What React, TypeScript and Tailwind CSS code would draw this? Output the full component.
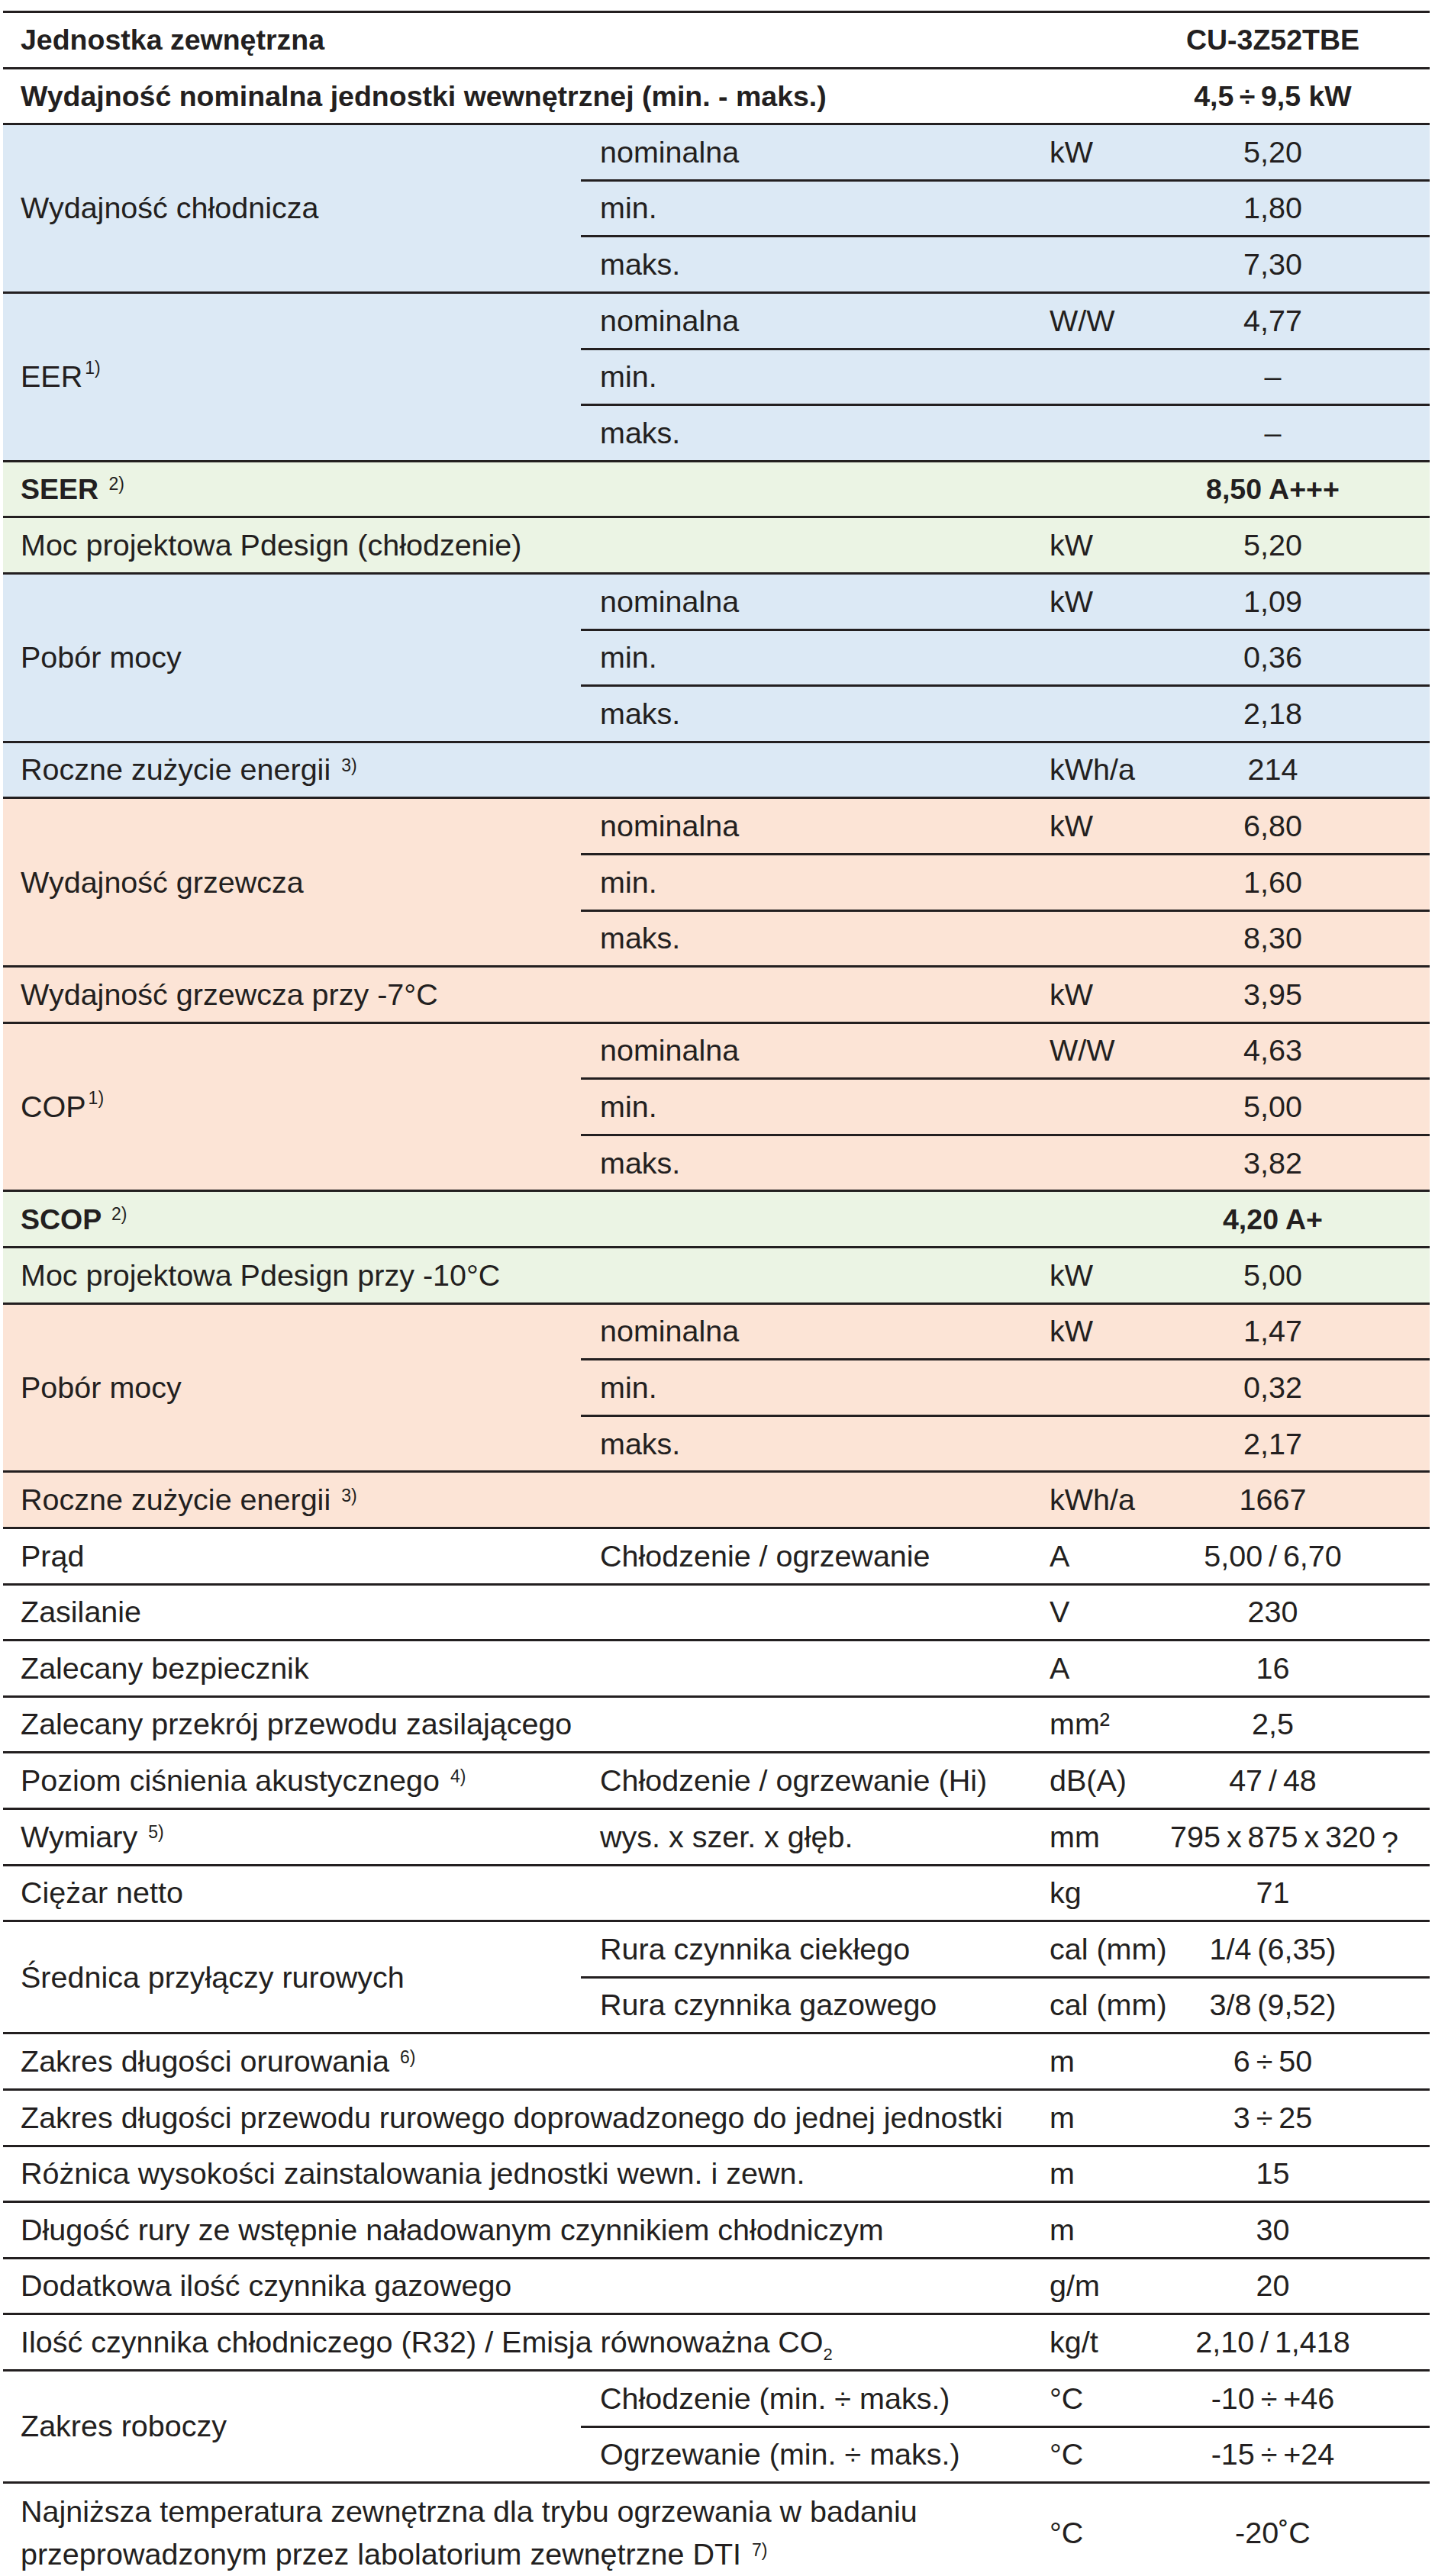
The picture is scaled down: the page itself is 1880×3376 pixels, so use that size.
import React from "react";

const BLUE = "bg-[#dce9f5]";
const GREEN = "bg-[#ebf4e4]";
const PEACH = "bg-[#fce4d6]";
const WHITE = "bg-white";

type Sub = { sub?: React.ReactNode; unit?: React.ReactNode; value?: React.ReactNode };

type Group = {
  bg: string;
  label: React.ReactNode;
  bold?: boolean;
  rows: Sub[];
};

const Note: React.FC<{ n: number }> = ({ n }) => (
  <sup className="ml-[3px] text-[23px] font-normal">{n})</sup>
);

const t = "\u2009";

const groups: Group[] = [
  { bg: WHITE, bold: true, label: "Jednostka zewnętrzna", rows: [{ value: "CU-3Z52TBE" }] },
  {
    bg: WHITE,
    bold: true,
    label: "Wydajność nominalna jednostki wewnętrznej (min. - maks.)",
    rows: [{ value: `4,5${t}÷${t}9,5 kW` }],
  },
  {
    bg: BLUE,
    label: "Wydajność chłodnicza",
    rows: [
      { sub: "nominalna", unit: "kW", value: "5,20" },
      { sub: "min.", value: "1,80" },
      { sub: "maks.", value: "7,30" },
    ],
  },
  {
    bg: BLUE,
    label: (
      <>
        EER <Note n={1} />
      </>
    ),
    rows: [
      { sub: "nominalna", unit: "W/W", value: "4,77" },
      { sub: "min.", value: "–" },
      { sub: "maks.", value: "–" },
    ],
  },
  {
    bg: GREEN,
    bold: true,
    label: (
      <>
        SEER <Note n={2} />
      </>
    ),
    rows: [{ value: "8,50 A+++" }],
  },
  { bg: GREEN, label: "Moc projektowa Pdesign (chłodzenie)", rows: [{ unit: "kW", value: "5,20" }] },
  {
    bg: BLUE,
    label: "Pobór mocy",
    rows: [
      { sub: "nominalna", unit: "kW", value: "1,09" },
      { sub: "min.", value: "0,36" },
      { sub: "maks.", value: "2,18" },
    ],
  },
  {
    bg: BLUE,
    label: (
      <>
        Roczne zużycie energii <Note n={3} />
      </>
    ),
    rows: [{ unit: "kWh/a", value: "214" }],
  },
  {
    bg: PEACH,
    label: "Wydajność grzewcza",
    rows: [
      { sub: "nominalna", unit: "kW", value: "6,80" },
      { sub: "min.", value: "1,60" },
      { sub: "maks.", value: "8,30" },
    ],
  },
  { bg: PEACH, label: "Wydajność grzewcza przy -7°C", rows: [{ unit: "kW", value: "3,95" }] },
  {
    bg: PEACH,
    label: (
      <>
        COP <Note n={1} />
      </>
    ),
    rows: [
      { sub: "nominalna", unit: "W/W", value: "4,63" },
      { sub: "min.", value: "5,00" },
      { sub: "maks.", value: "3,82" },
    ],
  },
  {
    bg: GREEN,
    bold: true,
    label: (
      <>
        SCOP <Note n={2} />
      </>
    ),
    rows: [{ value: "4,20 A+" }],
  },
  { bg: GREEN, label: "Moc projektowa Pdesign przy -10°C", rows: [{ unit: "kW", value: "5,00" }] },
  {
    bg: PEACH,
    label: "Pobór mocy",
    rows: [
      { sub: "nominalna", unit: "kW", value: "1,47" },
      { sub: "min.", value: "0,32" },
      { sub: "maks.", value: "2,17" },
    ],
  },
  {
    bg: PEACH,
    label: (
      <>
        Roczne zużycie energii <Note n={3} />
      </>
    ),
    rows: [{ unit: "kWh/a", value: "1667" }],
  },
  { bg: WHITE, label: "Prąd", rows: [{ sub: "Chłodzenie / ogrzewanie", unit: "A", value: `5,00${t}/${t}6,70` }] },
  { bg: WHITE, label: "Zasilanie", rows: [{ unit: "V", value: "230" }] },
  { bg: WHITE, label: "Zalecany bezpiecznik", rows: [{ unit: "A", value: "16" }] },
  { bg: WHITE, label: "Zalecany przekrój przewodu zasilającego", rows: [{ unit: "mm²", value: "2,5" }] },
  {
    bg: WHITE,
    label: (
      <>
        Poziom ciśnienia akustycznego <Note n={4} />
      </>
    ),
    rows: [{ sub: "Chłodzenie / ogrzewanie (Hi)", unit: "dB(A)", value: `47${t}/${t}48` }],
  },
  {
    bg: WHITE,
    label: (
      <>
        Wymiary <Note n={5} />
      </>
    ),
    rows: [
      {
        sub: "wys. x szer. x głęb.",
        unit: "mm",
        value: (
          <span className="relative">
            795{t}x{t}875{t}x{t}320
            <span className="absolute top-0 left-full ml-[8px]">?</span>
          </span>
        ),
      },
    ],
  },
  { bg: WHITE, label: "Ciężar netto", rows: [{ unit: "kg", value: "71" }] },
  {
    bg: WHITE,
    label: "Średnica przyłączy rurowych",
    rows: [
      { sub: "Rura czynnika ciekłego", unit: "cal (mm)", value: `1/4${t}(6,35)` },
      { sub: "Rura czynnika gazowego", unit: "cal (mm)", value: `3/8${t}(9,52)` },
    ],
  },
  {
    bg: WHITE,
    label: (
      <>
        Zakres długości orurowania <Note n={6} />
      </>
    ),
    rows: [{ unit: "m", value: `6${t}÷${t}50` }],
  },
  {
    bg: WHITE,
    label: "Zakres długości przewodu rurowego doprowadzonego do jednej jednostki",
    rows: [{ unit: "m", value: `3${t}÷${t}25` }],
  },
  { bg: WHITE, label: "Różnica wysokości zainstalowania jednostki wewn. i zewn.", rows: [{ unit: "m", value: "15" }] },
  {
    bg: WHITE,
    label: "Długość rury ze wstępnie naładowanym czynnikiem chłodniczym",
    rows: [{ unit: "m", value: "30" }],
  },
  { bg: WHITE, label: "Dodatkowa ilość czynnika gazowego", rows: [{ unit: "g/m", value: "20" }] },
  {
    bg: WHITE,
    label: (
      <>
        Ilość czynnika chłodniczego (R32) / Emisja równoważna CO
        <sub className="bottom-[-10px] text-[22px]">2</sub>
      </>
    ),
    rows: [{ unit: "kg/t", value: `2,10${t}/${t}1,418` }],
  },
  {
    bg: WHITE,
    label: "Zakres roboczy",
    rows: [
      { sub: "Chłodzenie (min. ÷ maks.)", unit: "°C", value: `-10${t}÷${t}+46` },
      { sub: "Ogrzewanie (min. ÷ maks.)", unit: "°C", value: `-15${t}÷${t}+24` },
    ],
  },
];

const UnitValue: React.FC<{ row: Sub; bold?: boolean }> = ({ row, bold }) => (
  <>
    <div className="w-[168px] shrink-0 pl-[23px] whitespace-nowrap">{row.unit}</div>
    <div className={`w-[295px] shrink-0 text-center whitespace-nowrap ${bold ? "text-[37.5px] font-bold" : ""}`}>
      {row.value}
    </div>
    <div className="flex-1" />
  </>
);

const Cells: React.FC<{ row: Sub; bold?: boolean }> = ({ row, bold }) => (
  <>
    <div className="w-[591px] shrink-0 pl-[25px] whitespace-nowrap">{row.sub}</div>
    <UnitValue row={row} bold={bold} />
  </>
);

const GroupRow: React.FC<{ g: Group }> = ({ g }) => {
  if (g.rows.length === 1) {
    return (
      <div className={`flex h-[73.6px] items-center border-t-[3px] border-[#231f20] ${g.bg}`}>
        <div className={`w-[757px] shrink-0 pl-[23px] whitespace-nowrap ${g.bold ? "text-[37.5px] font-bold" : ""}`}>
          {g.label}
        </div>
        <Cells row={g.rows[0]} bold={g.bold} />
      </div>
    );
  }
  return (
    <div className={`flex border-t-[3px] border-[#231f20] ${g.bg}`}>
      <div className="flex w-[757px] shrink-0 items-center pl-[23px] whitespace-nowrap">{g.label}</div>
      <div className="flex flex-1 flex-col">
        {g.rows.map((r, i) => (
          <div
            key={i}
            className={
              i === 0 ? "flex h-[70.6px] items-center" : "flex h-[73.6px] items-center border-t-[3px] border-[#231f20]"
            }
          >
            <Cells row={r} />
          </div>
        ))}
      </div>
    </div>
  );
};

const App: React.FC = () => {
  return (
    <div className="bg-white pt-[14px] font-[family-name:'Liberation_Sans',Arial,sans-serif] text-[39.5px] leading-normal text-[#231f20]">
      <div className="ml-[4px] w-[1869px]">
        {groups.map((g, i) => (
          <GroupRow key={i} g={g} />
        ))}
        <div className="flex items-center border-t-[3px] border-[#231f20] pt-[8px]">
          <div className="w-[1348px] shrink-0 pl-[23px] leading-[56px]">
            Najniższa temperatura zewnętrzna dla trybu ogrzewania w badaniu
            <br />
            przeprowadzonym przez labolatorium zewnętrzne DTI <Note n={7} />
          </div>
          <UnitValue row={{ unit: "°C", value: "-20˚C" }} />
        </div>
      </div>
    </div>
  );
};

export default App;
